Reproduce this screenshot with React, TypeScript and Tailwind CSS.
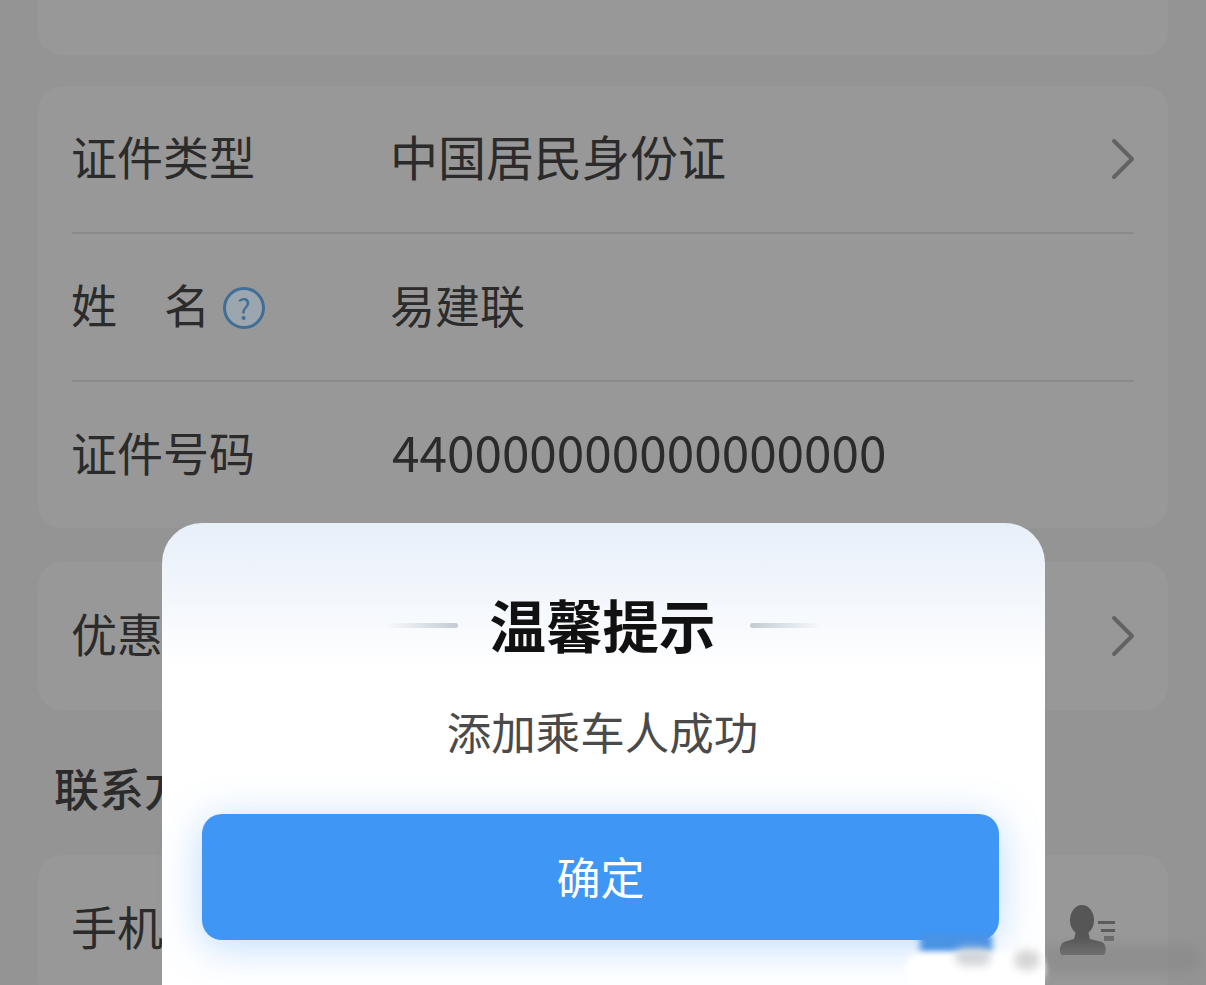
import { ChevronRight } from "lucide-react";

const FONT = "font-['Noto_Sans_CJK_SC','Noto_Sans',sans-serif]";

function Row({ label, value, arrow, tall, children }: { label: string; value?: React.ReactNode; arrow?: boolean; tall?: boolean; children?: React.ReactNode }) {
  return (
    <div className={`flex items-center pl-[33px] pr-[9px] ${tall ? "h-[148px]" : "h-[146px]"}`}>
      <div className="flex w-[319px] shrink-0 items-center pb-[8px] text-[46px] text-[#2b2b2b]">
        {label}
        {children}
      </div>
      <div className="flex-1 pb-[8px] text-[48px] text-[#2b2b2b]">{value}</div>
      {arrow && <ChevronRight className="h-[72px] w-[72px] text-[#626262]" strokeWidth={1.3} />}
    </div>
  );
}

function Line({ flip }: { flip?: boolean }) {
  return (
    <div
      className={`mt-[4px] h-[5px] w-[72px] rounded-full from-transparent to-[#c3cbd3] ${flip ? "bg-gradient-to-l" : "bg-gradient-to-r"}`}
    />
  );
}

export default function App() {
  return (
    <div className={`relative h-[985px] w-[1206px] overflow-hidden bg-[#949494] ${FONT}`}>
      <div className="flex flex-col px-[38px]">
        <div className="h-[55px] rounded-b-[24px] bg-[#989898]" />

        <div className="mt-[31px] rounded-[24px] bg-[#989898]">
          <Row label="证件类型" value="中国居民身份证" arrow />
          <div className="mx-[34px] h-[2px] bg-[#8a8a8a]" />
          <Row label="姓" value={<span className="text-[45px]">易建联</span>}>
            <span className="ml-[47px]">名</span>
            <span className="ml-[13px] flex h-[42px] w-[42px] translate-y-[5px] items-center justify-center rounded-full border-[3px] border-[#3f6f96] bg-[#9ba6ae] text-[28px] leading-none text-[#3f6f96]">
              ?
            </span>
          </Row>
          <div className="mx-[34px] h-[2px] bg-[#8a8a8a]" />
          <Row label="证件号码" value={<span className="ml-[2px] text-[49.5px]">440000000000000000</span>} />
        </div>

        <div className="mt-[34px] rounded-[24px] bg-[#989898]">
          <Row label="优惠类型" arrow tall />
        </div>

        <div className="mt-[46px] pl-[16px] text-[45px] font-medium leading-[64px] text-[#2b2b2b]">
          联系方式
        </div>

        <div className="mt-[35px] rounded-[24px] bg-[#989898]">
          <Row label="手机号码" tall />
        </div>
      </div>

      {/* contact icon */}
      <svg className="absolute left-[1056px] top-[903px]" width="64" height="60" viewBox="0 0 64 60" fill="#565656">
        <ellipse cx="26" cy="17" rx="12" ry="15" />
        <path d="M20 28h12l2 8 12 3c4 2 5 10 2 13H6c-4-3-2-11 2-13l10-3z" />
        <rect x="42" y="18" width="17" height="3" fill="#5c5c5c" />
        <rect x="45" y="26" width="14" height="3" fill="#5c5c5c" />
        <rect x="48" y="33" width="10" height="5" fill="#6a6a6a" />
      </svg>
      <div className="absolute left-[1040px] top-[945px] h-[28px] w-[160px] rounded-full bg-[#858585] opacity-50 blur-[6px]" />

      {/* dialog */}
      <div className="absolute left-[162px] top-[523px] flex h-[520px] w-[883px] flex-col items-center rounded-[40px] bg-gradient-to-b from-[#e7eff9] from-0% via-white via-[28%] to-white">
        <div className="mt-[68px] flex items-center gap-[33px]">
          <Line />
          <div className="-translate-x-[1px] text-[56.5px] font-bold leading-[64px] text-[#111111]">温馨提示</div>
          <Line flip />
        </div>
        <div className="mt-[44px] -translate-x-[1px] text-[44.5px] leading-[64px] text-[#4a4a4a]">添加乘车人成功</div>
        <div className="mt-[51px] flex h-[126px] w-[797px] -translate-x-[3px] items-center justify-center rounded-[20px] bg-[#3f96f5] pb-[3px] text-[44px] text-white shadow-[0_6px_40px_rgba(63,150,245,0.35)]">
          确定
        </div>
      </div>

      {/* watermark smudge */}
      <div className="absolute left-[920px] top-[934px] h-[20px] w-[72px] bg-[#4a93e4] blur-[3px]" />
      <div className="absolute left-[905px] top-[952px] h-[34px] w-[140px] rounded-full bg-white blur-[3px]" />
      <div className="absolute left-[955px] top-[948px] h-[18px] w-[36px] rounded-full bg-[#d3d6da] blur-[4px]" />
      <div className="absolute left-[1014px] top-[950px] h-[20px] w-[26px] rounded-full bg-[#d6d6d6] blur-[4px]" />
    </div>
  );
}
